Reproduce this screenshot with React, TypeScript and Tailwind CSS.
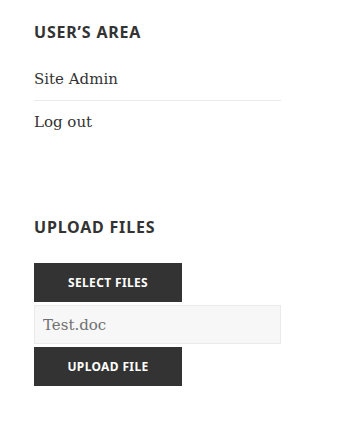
const headingFont = "font-['Noto_Sans',sans-serif]"
const serifFont = "font-['DejaVu_Serif',serif]"

function WidgetTitle({ children }: { children: React.ReactNode }) {
  return (
    <h2 className={`${headingFont} text-[16px] leading-[18px] font-bold uppercase tracking-[0.05em] text-[#333]`}>
      {children}
    </h2>
  )
}

function DarkButton({ children }: { children: React.ReactNode }) {
  return (
    <button className={`${headingFont} w-[148px] h-[39px] bg-[#333] text-white text-[12px] font-bold uppercase tracking-[0.03em]`}>
      {children}
    </button>
  )
}

export default function App() {
  return (
    <div className="w-[338px] h-[432px] bg-white pl-[34px] pr-[57px] pt-[23px]">
      <section>
        <WidgetTitle>User’s Area</WidgetTitle>
        <ul className={`${serifFont} mt-[25px] text-[15px] text-[#333]`}>
          <li className="border-b border-[#eaeaea] pb-[8px] leading-[26px]">Site Admin</li>
          <li className="pt-[8px] leading-[26px]">Log out</li>
        </ul>
      </section>

      <section className="mt-[83px]">
        <WidgetTitle>Upload Files</WidgetTitle>
        <div className="mt-[27px] flex flex-col gap-[3px]">
          <DarkButton>Select Files</DarkButton>
          <input
            readOnly
            value="Test.doc"
            className={`${serifFont} w-full h-[39px] bg-[#f7f7f7] border border-[#eaeaea] px-[8px] text-[15px] text-[#707070] outline-none`}
          />
          <DarkButton>Upload File</DarkButton>
        </div>
      </section>
    </div>
  )
}
